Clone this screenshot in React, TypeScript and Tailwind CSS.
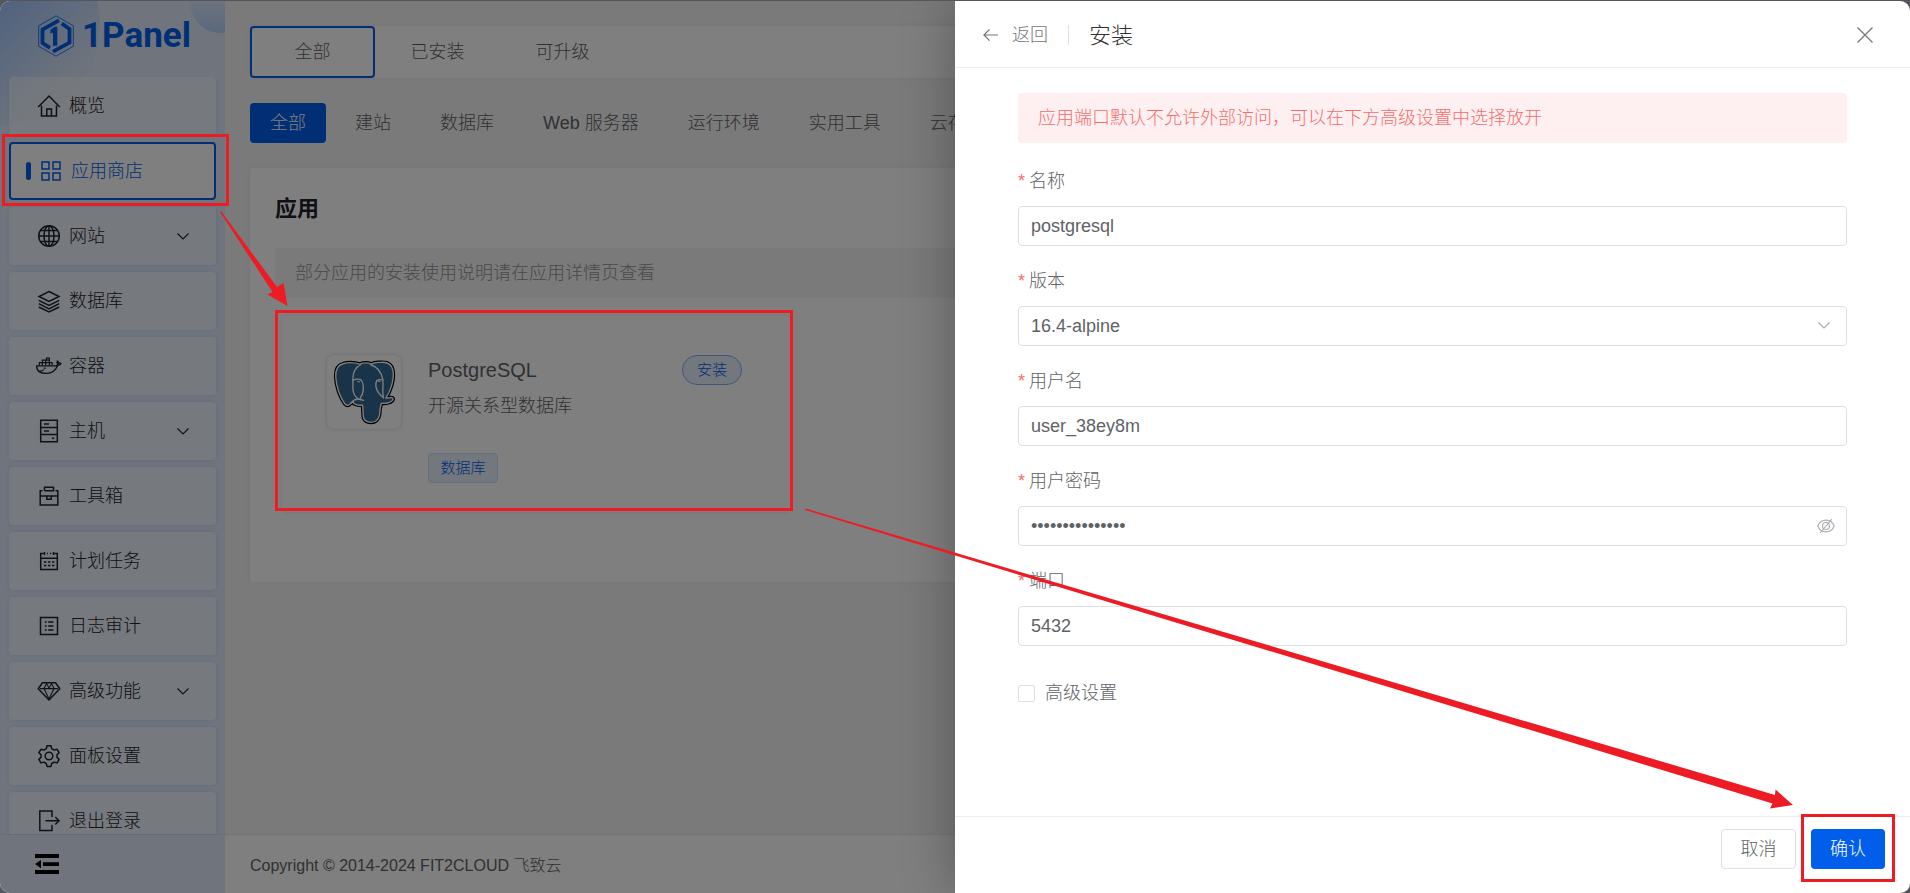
import React, { useState } from 'react';

type IconProps = { className?: string };

function Glyph({ className = 'size-6', children }: IconProps & { children: React.ReactNode }) {
  return (
    <svg
      viewBox="0 0 24 24"
      className={`shrink-0 ${className}`}
      fill="none"
      stroke="currentColor"
      strokeWidth="1.5"
      aria-hidden="true"
    >
      {children}
    </svg>
  );
}

const HomeIcon = () => (
  <Glyph>
    <path d="M1.2 13 12 2l10.8 11M4.5 11.5V22h15V11.5M9.8 22v-7h4.6v7" />
  </Glyph>
);
const AppsIcon = () => (
  <Glyph>
    <path d="M3 3h7v7H3zM14 3h7v7h-7zM3 14h7v7H3zM14 14h7v7h-7z" />
  </Glyph>
);
const GlobeIcon = () => (
  <Glyph>
    <circle cx="12" cy="12" r="10.3" />
    <ellipse cx="12" cy="12" rx="5" ry="10.3" />
    <path d="M12 1.7v20.6M1.7 12h20.6M3.4 6.6h17.2M3.4 17.4h17.2" />
  </Glyph>
);
const LayersIcon = () => (
  <Glyph>
    <path d="M12 2.5 22 7.5l-10 5-10-5zM1.8 11.3 12 16.5l10.2-5.2M1.8 14.6 12 19.8l10.2-5.2M1.8 18 12 22.9 22.2 18" />
  </Glyph>
);
const WhaleIcon = () => (
  <Glyph className="size-6 overflow-visible">
    <g transform="translate(0 1) scale(.92)">
      <path d="M-.3 11.800h19.900c1.700 0 2.600-.6 3-1.800-1-.9-1-2.200-.5-3.400 1 .5 1.600 1.300 1.700 2.200.9-.2 1.700 0 2.200.4-.6 1.400-1.800 2-3.400 2-2.200 5.600-6.300 8.800-12.500 8.800C3.500 20-.6 17.500-.3 11.800Z" />
      <path d="M2.500 11.500V8.300h14v3.200M5.800 11.500V5.600h7.600v5.900M9.500 11.500V5.600M10.300 5.600V3.300h3.100v2.300M13.500 8v3.500" strokeWidth="1.300" />
      <path d="M2.500 17.500c2 .2 3.800-.3 5-1.600" strokeWidth="1.200" />
      <circle cx="8.500" cy="14.400" r=".6" strokeWidth="1" />
    </g>
  </Glyph>
);
const ServerIcon = () => (
  <Glyph>
    <path d="M3.700 1.200h16.600v21.600H3.700zM3.700 8.500h16.600M3.700 15.500h16.600M7 5h5M7 12h5M15 19.200h2.200" />
  </Glyph>
);
const ToolboxIcon = () => (
  <Glyph>
    <path d="M7.500 6.800V3.200h9v3.600h-9M5.500 6.800H3.200V21h17.600V6.800h-2.300M3.200 12h17.600M9.800 12v3.300h4.400V12" />
  </Glyph>
);
const CalendarIcon = () => (
  <Glyph>
    <path d="M6.500 4.500H3.700V20.500h16.600V4.500h-2.800M3.700 9.200h16.600M7.500 3v3M16.500 3v3M10 4.500h1M13 4.500h1.200M7 13h2.400M11 13h2.400M15 13h2.400M7 16.600h2.400M11 16.600h2.400M15 16.600h2.400" />
  </Glyph>
);
const LogIcon = () => (
  <Glyph>
    <path d="M3.500 3.500h17v17h-17zM7.800 8h1.800M11.200 8h5.200M7.800 12h1.800M11.200 12h5.200M7.800 16h1.800M11.200 16h5.200" />
  </Glyph>
);
const GemIcon = () => (
  <Glyph>
    <path d="M5.500 3.800h13l4.300 6L12 21 1.200 9.800z" strokeLinejoin="round" />
    <path d="M3 9.600h18M7 9.600 12 20l5-10.400M7 9.600l2.500-5 2.500 4.400 2.500-4.400 2.500 5" strokeWidth="1.100" />
  </Glyph>
);
const GearIcon = () => (
  <Glyph>
    <path
      strokeLinejoin="round"
      d="M10 1.800h4l.7 2.900 2.500 1.400 2.900-.8 2 3.400-2.100 2.100v2.600l2.100 2-2 3.500-2.900-.8-2.500 1.400-.7 2.900h-4l-.7-2.900-2.500-1.400-2.900.8-2-3.500 2.100-2v-2.600L1.900 8.700l2-3.400 2.900.8 2.500-1.400z"
    />
    <circle cx="12" cy="12" r="3.800" />
  </Glyph>
);
const ExitIcon = () => (
  <Glyph>
    <path d="M15 8V2H2.800v19.500H15V16M8.500 11.800h13M18.300 8l3.700 3.800-3.700 3.800" />
  </Glyph>
);

function Chevron({ className = '' }: IconProps) {
  return (
    <svg viewBox="0 0 14 14" className={`size-3.5 ${className}`} fill="none" stroke="currentColor" strokeWidth="1.100" aria-hidden="true">
      <path d="m1.500 4.500 5.500 5.500 5.500-5.500" />
    </svg>
  );
}

function LogoMark() {
  return (
    <svg viewBox="0 0 36 42" className="h-[42px] w-9 shrink-0" fill="none" stroke="#005eeb" aria-hidden="true">
      <path d="M18 .8 35.300 10.800v20.400L18 41.200.7 31.200V10.800z" strokeWidth=".8" />
      <path d="M21 5.300 4.500 14.500V28l7.500 4.800" strokeWidth="3.800" />
      <path d="M23.800 8.500 31.500 14v13.700L15 36.700" strokeWidth="3.800" />
      <path d="M19.300 11.800v18.900H15V17.500l-2.600 1.300V15l4.100-3.200z" fill="#005eeb" stroke="none" />
    </svg>
  );
}

function ElephantLogo() {
  const body =
    'M68 73C51 77 45 92 46 112c1 28 13 62 27 80 6 7 12 6 17-1l8-7c-2 8 10 14 28 12l2 34c2 18 24 20 36 14 10-6 13-18 13-29 0-10 3-18 5-25 10 2 26 0 33-8 4-7-1-10-9-8l-11 1c13-19 26-54 21-82-3-19-18-26-38-24-13-1-20 1-26 5-12-5-24-4-34 0-18-5-36-6-50-1Z';
  return (
    <svg viewBox="20 47 220 220" className="size-[74px]" fill="none" strokeLinejoin="round" strokeLinecap="round" aria-hidden="true">
      <path d={body} stroke="#000" strokeWidth="11" />
      <path d={body} fill="#336791" stroke="#fff" strokeWidth="4" />
      <g stroke="#fff" strokeWidth="4">
        <path d="M120 76c-15 7-23 22-23 42v30c1 16 8 25 17 30" />
        <path d="M150 76c20 6 32 24 36 44 2 18-3 34 2 54" />
        <path d="M98 122c8-4 17-4 23-1 8 8 9 28 4 43-3 7-9 11-6 16" />
        <path d="M184 121c-6-1-12-1-16 2-6 12-1 27 5 36 6 8 9 12 15 15" />
        <path d="M90 191l12-11c8-2 18-2 26 2" />
        <path d="M111 126l6 1M172 126l6-1" strokeWidth="3" />
      </g>
    </svg>
  );
}

type NavEntry = { label: string; icon: () => React.ReactElement; active?: boolean; nested?: boolean };

const navEntries: NavEntry[] = [
  { label: '概览', icon: HomeIcon },
  { label: '应用商店', icon: AppsIcon, active: true },
  { label: '网站', icon: GlobeIcon, nested: true },
  { label: '数据库', icon: LayersIcon },
  { label: '容器', icon: WhaleIcon },
  { label: '主机', icon: ServerIcon, nested: true },
  { label: '工具箱', icon: ToolboxIcon },
  { label: '计划任务', icon: CalendarIcon },
  { label: '日志审计', icon: LogIcon },
  { label: '高级功能', icon: GemIcon, nested: true },
  { label: '面板设置', icon: GearIcon },
  { label: '退出登录', icon: ExitIcon },
];

function NavItem({ label, icon: Icon, active, nested }: NavEntry) {
  const state = active
    ? 'border-2 border-[#005eeb] bg-white pl-[15px] text-[#005eeb]'
    : 'bg-white/45 pl-7 text-[#1f2329] shadow-[0_0_4px_rgba(0,94,235,0.1)]';
  return (
    <li>
      <a href="#" className={`flex h-[58px] items-center gap-2 rounded pr-[26px] ${state}`}>
        {active && <span className="h-[18px] w-[5px] rounded-sm bg-[#005eeb]" />}
        <Icon />
        <span>{label}</span>
        {nested && <Chevron className="ml-auto" />}
      </a>
    </li>
  );
}

function Sidebar() {
  return (
    <aside className="relative flex w-[225px] shrink-0 flex-col overflow-hidden bg-[#dfe9fa]">
      <div className="absolute -left-[100px] -top-[76px] size-[200px] rounded-full bg-linear-to-br from-[#a2c6ff] from-45% to-[#dbe6f8] to-80%" />
      <div className="absolute -top-[30px] left-[190px] size-[62px] rounded-full bg-linear-to-b from-[#dfe9fa] from-40% to-[#b4d0fb]" />
      <a href="#" className="relative flex h-[76px] items-start gap-2 pl-[38px] pt-3.5">
        <LogoMark />
        <span className="font-['Roboto','Liberation_Sans',sans-serif] text-[35px] leading-[42px] font-bold text-[#005eeb]">1Panel</span>
      </a>
      <nav className="relative min-h-0 flex-1 overflow-hidden px-[9px]">
        <ul className="flex flex-col gap-[7px]">
          {navEntries.map((entry) => (
            <NavItem key={entry.label} {...entry} />
          ))}
        </ul>
      </nav>
      <div className="relative flex h-[59px] shrink-0 items-center border-t border-[#d5dbe6] bg-[#e0e8f8] pl-[35px]">
        <button type="button" aria-label="折叠菜单">
          <svg viewBox="0 0 24 20" className="h-5 w-6" fill="#000" aria-hidden="true">
            <path d="M0 0h24v4H0zM8 8.300h16v3.600H8zM0 16h24v4H0zM0 10.100l6-4.100v8.200z" />
          </svg>
        </button>
      </div>
    </aside>
  );
}

const tabs = ['全部', '已安装', '可升级'];
const categories = ['全部', '建站', '数据库', 'Web 服务器', '运行环境', '实用工具', '云存储'];

function Store() {
  return (
    <div className="flex min-w-0 flex-1 flex-col bg-[#f4f4f4]">
      <main className="flex-1 px-[25px] pt-[25px]">
        <div className="flex rounded bg-white shadow-[0_0_5px_rgba(0,94,235,0.08)]">
          {tabs.map((tab, i) => (
            <button
              key={tab}
              type="button"
              className={`h-[52px] w-[125px] rounded ${i === 0 ? 'border-2 border-[#005eeb]' : ''}`}
            >
              {tab}
            </button>
          ))}
        </div>
        <div className="mt-[25px] flex gap-[9px] overflow-hidden whitespace-nowrap">
          {categories.map((category, i) => (
            <button
              key={category}
              type="button"
              className={`h-10 shrink-0 rounded px-5 ${i === 0 ? 'bg-[#005eeb] text-white' : ''}`}
            >
              {category}
            </button>
          ))}
        </div>
        <section className="mt-[25px] rounded bg-white px-[25px] pb-[70px] pt-[25px] shadow-[0_0_5px_rgba(0,94,235,0.08)]">
          <h1 className="text-[22px] leading-8 font-bold text-[#1f2329]">应用</h1>
          <p className="mt-[23px] rounded bg-[#f4f4f5] px-5 py-3 leading-[26px] text-[#909399]">
            部分应用的安装使用说明请在应用详情页查看
          </p>
          <article className="ml-[7px] mt-[18px] flex w-[508px] gap-[27px] rounded pb-[29px] pl-[45px] pr-12 pt-[39px] shadow-[0_0_4px_rgba(0,0,0,0.1)]">
            <div className="size-[74px] shrink-0 rounded-lg shadow-[0_0_5px_rgba(0,0,0,0.18)]">
              <ElephantLogo />
            </div>
            <div className="flex-1">
              <div className="flex items-center justify-between">
                <h2 className="text-xl leading-[30px]">PostgreSQL</h2>
                <button
                  type="button"
                  className="h-[30px] w-[60px] rounded-full border border-[#80aff5] bg-[#e6effd] text-[15px] text-[#005eeb]"
                >
                  安装
                </button>
              </div>
              <p className="mt-[9px] leading-6">开源关系型数据库</p>
              <span className="mt-[35px] flex h-[30px] w-[70px] items-center justify-center rounded border border-[#ccdffb] bg-[#e6effd] text-[15px] text-[#005eeb]">
                数据库
              </span>
            </div>
          </article>
        </section>
      </main>
      <footer className="flex h-[59px] items-center border-t border-[#e8e8e8] bg-white px-[25px] pt-1 text-base">
        Copyright © 2014-2024 FIT2CLOUD 飞致云
      </footer>
    </div>
  );
}

const fieldBox =
  'h-10 w-full rounded border border-[#dcdfe6] bg-white px-3 text-[#606266] outline-none focus:border-[#005eeb]';

function Field({ id, label, children }: { id: string; label: string; children: React.ReactNode }) {
  return (
    <div className="mb-[21px]">
      <label htmlFor={id} className="mb-[11px] flex h-7 items-center gap-1">
        <span className="text-[#f56c6c]">*</span>
        {label}
      </label>
      <div className="relative">{children}</div>
    </div>
  );
}

function EyeOff() {
  return (
    <svg viewBox="0 0 18 16" className="h-4 w-[18px]" fill="none" stroke="#a8abb2" strokeWidth="1.100" aria-hidden="true">
      <path d="M.8 8C4 .2 14 .2 17.200 8 14 15.800 4 15.800.8 8ZM15 1 3 15" />
      <circle cx="9" cy="8" r="3.500" />
    </svg>
  );
}

function InstallDrawer() {
  const [name, setName] = useState('postgresql');
  const [user, setUser] = useState('user_38ey8m');
  const [password, setPassword] = useState('postgres_4tGbz8');
  const [port, setPort] = useState('5432');
  return (
    <div
      role="dialog"
      aria-label="安装"
      className="absolute inset-y-0 right-0 flex w-1/2 flex-col bg-white shadow-[0_0_50px_rgba(0,0,0,0.3)]"
    >
      <header className="flex h-[67px] shrink-0 items-center border-b border-[#ebecef] pl-7 pr-[37px] pt-0.5">
        <button type="button" className="flex items-center gap-3.5 text-[#73767a]">
          <svg viewBox="0 0 16 14" className="h-3.5 w-[15px]" fill="none" stroke="currentColor" strokeWidth="1.300" aria-hidden="true">
            <path d="M16 7H1.500M7 1 1 7l6 6" />
          </svg>
          返回
        </button>
        <span className="mx-5 h-5 w-px bg-[#dcdfe6]" />
        <h2 className="text-[22px] text-[#303133]">安装</h2>
        <button type="button" aria-label="关闭" className="ml-auto">
          <svg viewBox="0 0 16 16" className="size-4" fill="none" stroke="#73767a" strokeWidth="1.300" aria-hidden="true">
            <path d="m.5.5 15 15M15.500.5l-15 15" />
          </svg>
        </button>
      </header>
      <form className="min-h-0 flex-1 px-[63px] pt-[25px]" onSubmit={(e) => e.preventDefault()}>
        <p className="mb-6 rounded bg-[#fef0f0] px-5 py-3 leading-[26px] text-[#f56c6c]">
          应用端口默认不允许外部访问，可以在下方高级设置中选择放开
        </p>
        <Field id="name" label="名称">
          <input id="name" className={fieldBox} value={name} onChange={(e) => setName(e.target.value)} />
        </Field>
        <Field id="version" label="版本">
          <select id="version" className={`${fieldBox} appearance-none`} defaultValue="16.4-alpine">
            <option>16.4-alpine</option>
          </select>
          <Chevron className="pointer-events-none absolute right-4 top-3 text-[#a8abb2]" />
        </Field>
        <Field id="user" label="用户名">
          <input id="user" className={fieldBox} value={user} onChange={(e) => setUser(e.target.value)} />
        </Field>
        <Field id="password" label="用户密码">
          <input
            id="password"
            type="password"
            className={fieldBox}
            value={password}
            onChange={(e) => setPassword(e.target.value)}
          />
          <button type="button" aria-label="显示密码" className="absolute right-3 top-3">
            <EyeOff />
          </button>
        </Field>
        <Field id="port" label="端口">
          <input id="port" className={fieldBox} value={port} onChange={(e) => setPort(e.target.value)} />
        </Field>
        <label className="mt-[35px] flex h-6 w-fit items-center gap-2.5">
          <input
            type="checkbox"
            className="size-[17px] appearance-none rounded-xs border border-[#dcdfe6] bg-white checked:bg-[#005eeb]"
          />
          高级设置
        </label>
      </form>
      <footer className="flex h-[77px] shrink-0 items-start justify-end gap-[15px] border-t border-[#ebecef] pr-[25px] pt-3">
        <button type="button" className="h-10 w-[75px] rounded border border-[#dcdfe6] bg-white">
          取消
        </button>
        <button type="submit" className="h-10 w-[74px] rounded bg-[#005eeb] text-white">
          确认
        </button>
      </footer>
    </div>
  );
}

function Annotations() {
  return (
    <svg className="pointer-events-none absolute left-0 top-0 h-full w-full" fill="none" stroke="#ed1c24" strokeWidth="3" aria-hidden="true">
      <rect x="3.500" y="135.500" width="224" height="69" />
      <rect x="276.500" y="311.500" width="515" height="198" />
      <rect x="1802.500" y="815.500" width="91" height="65" />
      <g fill="#ed1c24" stroke="none">
        <path d="M221 211 277 287l6.500-4 4 23-20-11.500 5-2.500L220 212z" />
        <path d="M805.500 508.500 1775 795l.5-5.500 17.500 15.500-23 3.500 2.500-5L805 510z" />
      </g>
    </svg>
  );
}

export default function App() {
  return (
    <div className="relative h-screen overflow-hidden bg-[#55555c] pt-px font-['Liberation_Sans','Noto_Sans_CJK_SC',sans-serif] text-[18px] font-light text-[#606266]">
      <div className="relative h-full overflow-hidden rounded-[10px]">
        <div className="flex h-full">
          <Sidebar />
          <Store />
        </div>
        <div className="absolute inset-0 bg-black/50" />
        <InstallDrawer />
      </div>
      <Annotations />
    </div>
  );
}
